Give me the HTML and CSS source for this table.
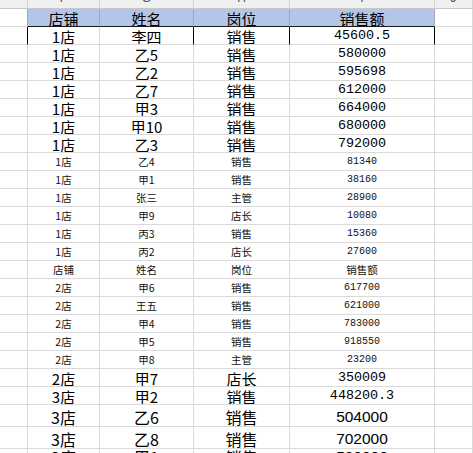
FILE: index.html
```html
<!DOCTYPE html>
<html lang="zh">
<head>
<meta charset="utf-8">
<link rel="stylesheet" href="styles.css">
</head>
<body>
<div class="sheet">
  <div class="row colhead">
    <div class="c"></div><div class="c"><span class="lt">F</span></div><div class="c"><span class="lt">G</span></div><div class="c"><span class="lt">H</span></div><div class="c"><span class="lt">I</span></div><div class="c"><span class="lt">J</span></div>
  </div>
  <div class="row big head">
    <div class="c"></div><div class="c hb">店铺</div><div class="c hb">姓名</div><div class="c hb">岗位</div><div class="c hb">销售额</div><div class="c"></div>
  </div>
  <div class="row big first">
    <div class="c"></div><div class="c">1店</div><div class="c">李四</div><div class="c">销售</div><div class="c num">45600.5</div><div class="c"></div>
  </div>
  <div class="row big"><div class="c"></div><div class="c">1店</div><div class="c">乙5</div><div class="c">销售</div><div class="c num">580000</div><div class="c"></div></div>
  <div class="row big"><div class="c"></div><div class="c">1店</div><div class="c">乙2</div><div class="c">销售</div><div class="c num">595698</div><div class="c"></div></div>
  <div class="row big"><div class="c"></div><div class="c">1店</div><div class="c">乙7</div><div class="c">销售</div><div class="c num">612000</div><div class="c"></div></div>
  <div class="row big"><div class="c"></div><div class="c">1店</div><div class="c">甲3</div><div class="c">销售</div><div class="c num">664000</div><div class="c"></div></div>
  <div class="row big"><div class="c"></div><div class="c">1店</div><div class="c">甲10</div><div class="c">销售</div><div class="c num">680000</div><div class="c"></div></div>
  <div class="row big"><div class="c"></div><div class="c">1店</div><div class="c">乙3</div><div class="c">销售</div><div class="c num">792000</div><div class="c"></div></div>
  <div class="row small"><div class="c"></div><div class="c">1店</div><div class="c">乙4</div><div class="c">销售</div><div class="c num">81340</div><div class="c"></div></div>
  <div class="row small"><div class="c"></div><div class="c">1店</div><div class="c">甲1</div><div class="c">销售</div><div class="c num">38160</div><div class="c"></div></div>
  <div class="row small"><div class="c"></div><div class="c">1店</div><div class="c">张三</div><div class="c">主管</div><div class="c num">28900</div><div class="c"></div></div>
  <div class="row small"><div class="c"></div><div class="c">1店</div><div class="c">甲9</div><div class="c">店长</div><div class="c num">10080</div><div class="c"></div></div>
  <div class="row small"><div class="c"></div><div class="c">1店</div><div class="c">丙3</div><div class="c">销售</div><div class="c num">15360</div><div class="c"></div></div>
  <div class="row small"><div class="c"></div><div class="c">1店</div><div class="c">丙2</div><div class="c">店长</div><div class="c num">27600</div><div class="c"></div></div>
  <div class="row small"><div class="c"></div><div class="c">店铺</div><div class="c">姓名</div><div class="c">岗位</div><div class="c">销售额</div><div class="c"></div></div>
  <div class="row small"><div class="c"></div><div class="c">2店</div><div class="c">甲6</div><div class="c">销售</div><div class="c num">617700</div><div class="c"></div></div>
  <div class="row small"><div class="c"></div><div class="c">2店</div><div class="c">王五</div><div class="c">销售</div><div class="c num">621000</div><div class="c"></div></div>
  <div class="row small"><div class="c"></div><div class="c">2店</div><div class="c">甲4</div><div class="c">销售</div><div class="c num">783000</div><div class="c"></div></div>
  <div class="row small"><div class="c"></div><div class="c">2店</div><div class="c">甲5</div><div class="c">销售</div><div class="c num">918550</div><div class="c"></div></div>
  <div class="row small"><div class="c"></div><div class="c">2店</div><div class="c">甲8</div><div class="c">主管</div><div class="c num">23200</div><div class="c"></div></div>
  <div class="row big"><div class="c"></div><div class="c">2店</div><div class="c">甲7</div><div class="c">店长</div><div class="c num">350009</div><div class="c"></div></div>
  <div class="row big"><div class="c"></div><div class="c">3店</div><div class="c">甲2</div><div class="c">销售</div><div class="c num">448200.3</div><div class="c"></div></div>
  <div class="row large"><div class="c"></div><div class="c">3店</div><div class="c">乙6</div><div class="c">销售</div><div class="c num">504000</div><div class="c"></div></div>
  <div class="row large"><div class="c"></div><div class="c">3店</div><div class="c">乙8</div><div class="c">销售</div><div class="c num">702000</div><div class="c"></div></div>
  <div class="row large partial"><div class="c"></div><div class="c">3店</div><div class="c">甲1</div><div class="c">销售</div><div class="c num">530000</div><div class="c"></div></div>
</div>
</body>
</html>
```

FILE: styles.css
```css
html, body {
  margin: 0;
  padding: 0;
  background: #ffffff;
  overflow: hidden;
}
.sheet {
  width: 473px;
  font-family: "Noto Sans CJK SC", "Noto Sans", sans-serif;
  color: #000;
}
.row {
  display: grid;
  grid-template-columns: 28px 72px 94px 96px 145px 38px;
  height: 18px;
}
.c {
  box-sizing: border-box;
  border-right: 1px solid #dadada;
  border-bottom: 1px solid #dadada;
  display: flex;
  align-items: center;
  justify-content: center;
  white-space: nowrap;
  overflow: hidden;
  line-height: 1;
}
.colhead {
  height: 9px;
  background: #f0f0f0;
}
.colhead .c {
  border-right-color: #d4d4d4;
  border-bottom-color: #c8c8c8;
  align-items: flex-start;
  font-family: "Liberation Sans", sans-serif;
  font-size: 12px;
  color: #555;
}
.colhead .lt {
  display: block;
  line-height: 12px;
  height: 12px;
  margin-top: -8px;
}
.big .c {
  font-size: 15px;
  padding-top: 1px;
}
.big .num {
  font-family: "Liberation Mono", monospace;
  font-size: 13.4px;
}
.head .hb {
  background: #b4c6e7;
  border-right-color: #9fa9b8;
  border-bottom: 1px solid #1a1a1a;
}
.head .c:first-child {
  border-right-color: #a8a8a8;
}
.first .c:nth-child(1),
.first .c:nth-child(3),
.first .c:nth-child(4),
.first .c:nth-child(5) {
  border-right-color: #000;
}
.small .c {
  font-size: 10.5px;
  color: #111;
  padding-top: 1px;
}
.small .num {
  font-family: "Liberation Mono", monospace;
  font-size: 10px;
}
.large {
  height: 22px;
}
.large .c {
  font-size: 16px;
  padding-top: 2px;
}
.large .num {
  font-family: "Liberation Sans", sans-serif;
  font-size: 15.5px;
}
.partial .c {
  align-items: flex-start;
  padding-top: 0;
}
```
